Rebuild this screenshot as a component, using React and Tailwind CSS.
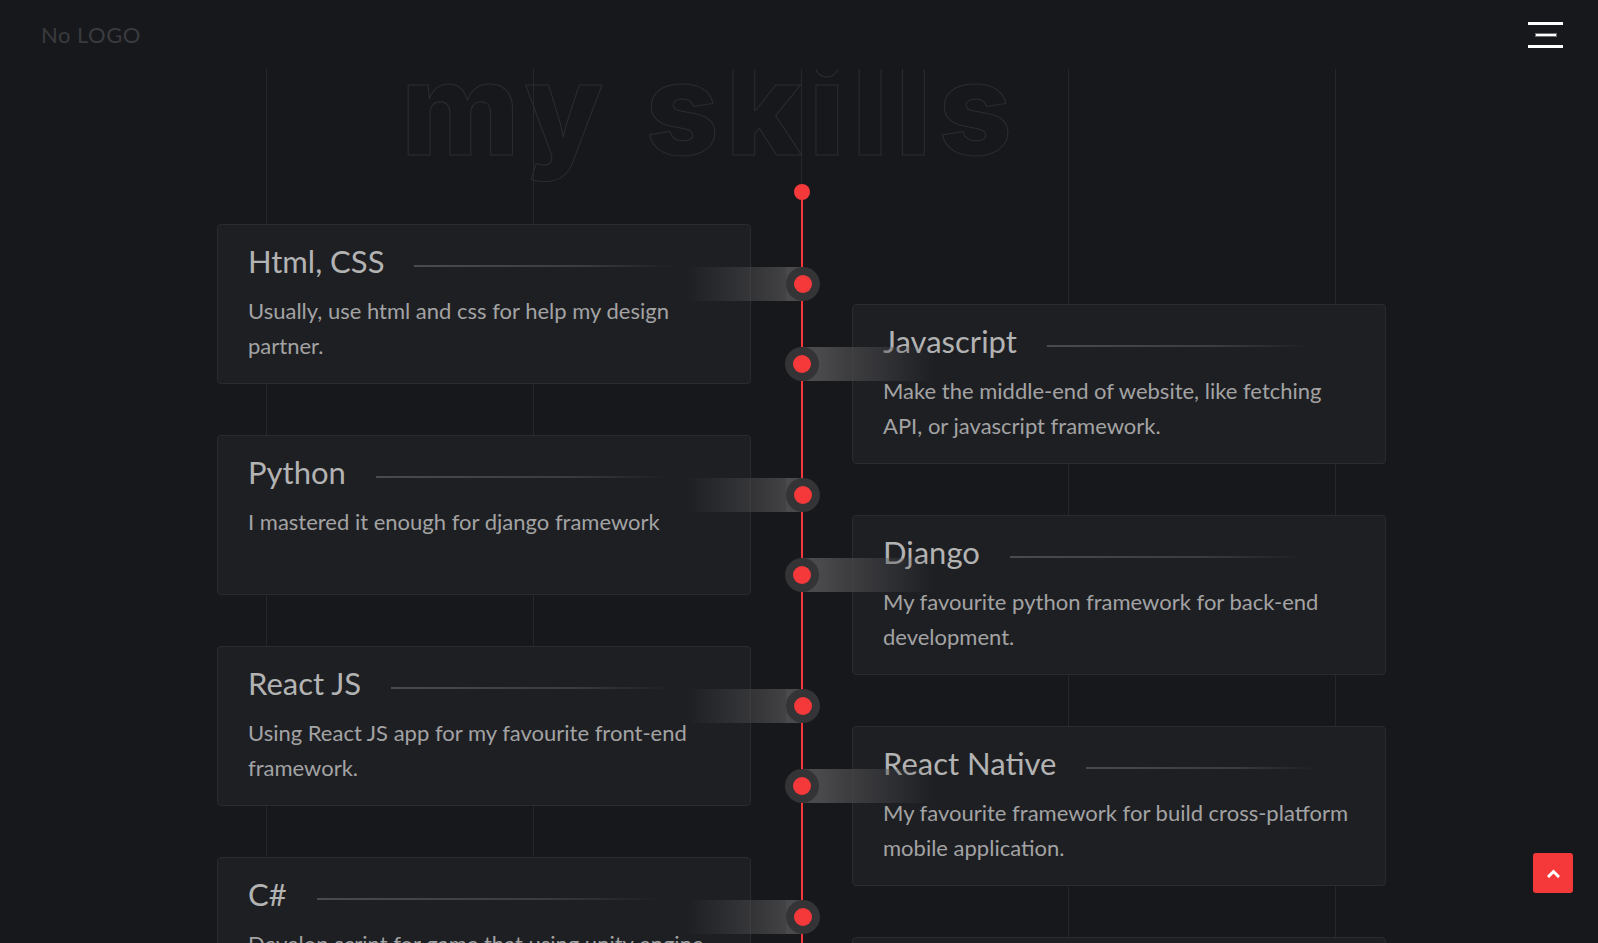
import React from "react";

const left = [
  { title: "Html, CSS", text: "Usually, use html and css for help my design partner." },
  { title: "Python", text: "I mastered it enough for django framework" },
  { title: "React JS", text: "Using React JS app for my favourite front-end framework." },
  { title: "C#", text: "Develop script for game that using unity engine." },
];

const right = [
  { title: "Javascript", text: "Make the middle-end of website, like fetching API, or javascript framework." },
  { title: "Django", text: "My favourite python framework for back-end development." },
  { title: "React Native", text: "My favourite framework for build cross-platform mobile application." },
  { title: "Flutter", text: "Learning it for build mobile application." },
];

function Knob() {
  return (
    <div className="w-[34px] h-[34px] shrink-0 rounded-full bg-[#343437] flex items-center justify-center">
      <div className="w-[18px] h-[18px] rounded-full bg-[#f5393b]" />
    </div>
  );
}

function SkillCard({ item, side }) {
  return (
    <div className="relative h-[160px] rounded-[4px] border border-[#2a2b2f] bg-[#1e1f23] px-[30px] pt-[16px]">
      <div className="flex items-center">
        <h3 className="text-[31px] leading-[40px] text-[#b3b3b3] whitespace-nowrap">{item.title}</h3>
        <div className="ml-[30px] mt-[10px] h-[2px] flex-1 bg-[linear-gradient(to_right,#4b4b4d,#3c3c3f_55%,transparent_85%)]" />
      </div>
      <p className="mt-[12px] text-[22px] leading-[35px] text-[#a3a3a3]">{item.text}</p>

      {side === "left" ? (
        <div className="absolute top-[42px] right-[-70px] z-10 flex items-center">
          <div className="w-[116px] h-[34px] bg-gradient-to-r from-transparent to-[#4a4a4c]" />
          <div className="ml-[-17px] w-[17px] h-[34px] bg-[#4a4a4c]" />
          <div className="ml-[-17px]">
            <Knob />
          </div>
        </div>
      ) : (
        <div className="absolute top-[42px] left-[-68px] z-10 flex items-center">
          <Knob />
          <div className="ml-[-17px] w-[17px] h-[34px] bg-[#4a4a4c] -z-10" />
          <div className="w-[115px] h-[34px] bg-gradient-to-r from-[#4a4a4c] to-transparent -z-10" />
        </div>
      )}
    </div>
  );
}

export default function App() {
  return (
    <div className="relative min-h-screen overflow-hidden bg-[#17181c]" style={{ fontFamily: "Lato, 'Noto Sans', sans-serif" }}>
      {/* background column lines */}
      <div className="absolute inset-0 grid grid-cols-[repeat(6,267.2px)] pointer-events-none">
        <div className="border-r border-[#26272b]" />
        <div className="border-r border-[#26272b]" />
        <div className="border-r border-[#26272b]" />
        <div className="border-r border-[#26272b]" />
        <div className="border-r border-[#26272b]" />
        <div />
      </div>

      <header className="fixed top-0 inset-x-0 z-30 h-[69px] bg-[#17181c] flex items-center justify-between pl-[41px] pr-[35px]">
        <span className="text-[22px] tracking-[0.5px] text-[#3a3b3f]">No LOGO</span>
        <button className="flex flex-col items-center gap-[8px]">
          <span className="block w-[35px] h-[3px] bg-white" />
          <span className="block w-[22px] h-[4px] border border-[#707070] bg-white" />
          <span className="block w-[35px] h-[3px] bg-white" />
        </button>
      </header>

      <main className="relative z-10">
        <h1
          className="pt-[45px] pl-[401px] text-[128px] leading-none font-extrabold tracking-[7px] text-transparent [-webkit-text-stroke:1px_#2c2d32] whitespace-nowrap"
          style={{ fontFamily: "Inter, sans-serif" }}
        >
          my skills
        </h1>

        <section className="relative mt-[11px] ml-[217px] w-[1169px] pt-[40px]">
          <div className="absolute left-[584px] top-[8px] bottom-0 w-[2px] bg-[#f5393b]" />
          <div className="absolute left-[577px] top-0 w-[16px] h-[16px] rounded-full bg-[#f5393b]" />

          <div className="relative flex gap-[101px]">
            <div className="w-[534px] flex flex-col gap-[51px]">
              {left.map((s) => (
                <SkillCard key={s.title} item={s} side="left" />
              ))}
            </div>
            <div className="w-[534px] pt-[80px] flex flex-col gap-[51px]">
              {right.map((s) => (
                <SkillCard key={s.title} item={s} side="right" />
              ))}
            </div>
          </div>
        </section>
      </main>

      <button className="fixed right-[25px] bottom-[50px] z-40 w-10 h-10 rounded-[3px] bg-[#f5393b] flex items-center justify-center">
        <svg width="13" height="9" viewBox="0 0 13 9" fill="none" stroke="white" strokeWidth="3" strokeLinecap="square">
          <polyline points="2 7 6.5 2.5 11 7" />
        </svg>
      </button>
    </div>
  );
}
